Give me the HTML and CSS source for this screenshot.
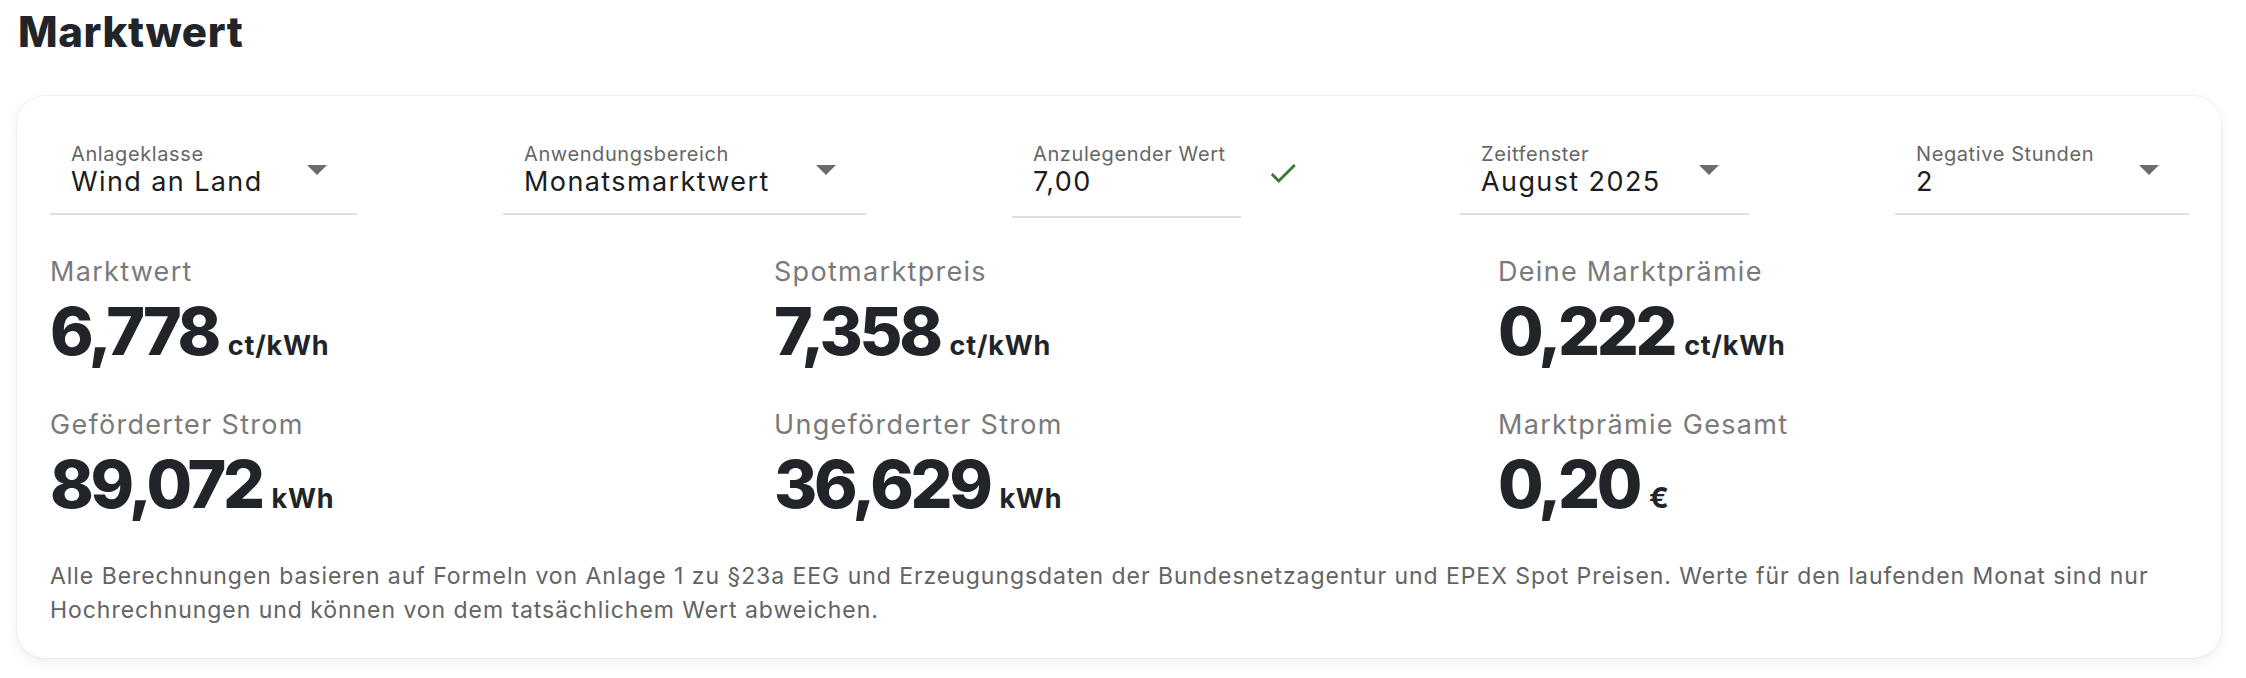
FILE: index.html
```html
<!DOCTYPE html>
<html lang="de">
<head>
<meta charset="utf-8">
<title>Marktwert</title>
<link rel="stylesheet" href="styles.css">
</head>
<body>
<h1 class="page-title">Marktwert</h1>
<section class="card">
  <div class="filters">
    <div class="field field-select w-anlage">
      <div class="field-text">
        <span class="field-label">Anlageklasse</span>
        <span class="field-value">Wind an Land</span>
      </div>
      <svg class="dropdown" viewBox="0 0 20 10" width="20" height="10"><path d="M0 0h20L10 10z"/></svg>
    </div>
    <div class="field field-select w-anwendung">
      <div class="field-text">
        <span class="field-label">Anwendungsbereich</span>
        <span class="field-value">Monatsmarktwert</span>
      </div>
      <svg class="dropdown" viewBox="0 0 20 10" width="20" height="10"><path d="M0 0h20L10 10z"/></svg>
    </div>
    <div class="input-group">
      <div class="field w-wert">
        <div class="field-text">
          <span class="field-label">Anzulegender Wert</span>
          <span class="field-value">7,00</span>
        </div>
      </div>
      <svg class="check" viewBox="0 0 24 24" width="34" height="34"><path d="M9 16.17L4.83 12l-1.42 1.41L9 19 21 7l-1.41-1.41z"/></svg>
    </div>
    <div class="field field-select w-zeit">
      <div class="field-text">
        <span class="field-label">Zeitfenster</span>
        <span class="field-value">August 2025</span>
      </div>
      <svg class="dropdown" viewBox="0 0 20 10" width="20" height="10"><path d="M0 0h20L10 10z"/></svg>
    </div>
    <div class="field field-select w-negativ">
      <div class="field-text">
        <span class="field-label">Negative Stunden</span>
        <span class="field-value">2</span>
      </div>
      <svg class="dropdown" viewBox="0 0 20 10" width="20" height="10"><path d="M0 0h20L10 10z"/></svg>
    </div>
  </div>

  <div class="stats">
    <div class="stat">
      <div class="stat-label">Marktwert</div>
      <div class="stat-value"><span class="num">6,778</span><span class="unit">ct/kWh</span></div>
    </div>
    <div class="stat">
      <div class="stat-label">Spotmarktpreis</div>
      <div class="stat-value"><span class="num">7,358</span><span class="unit">ct/kWh</span></div>
    </div>
    <div class="stat">
      <div class="stat-label">Deine Marktprämie</div>
      <div class="stat-value"><span class="num">0,222</span><span class="unit">ct/kWh</span></div>
    </div>
    <div class="stat">
      <div class="stat-label">Geförderter Strom</div>
      <div class="stat-value"><span class="num">89,072</span><span class="unit">kWh</span></div>
    </div>
    <div class="stat">
      <div class="stat-label">Ungeförderter Strom</div>
      <div class="stat-value"><span class="num">36,629</span><span class="unit">kWh</span></div>
    </div>
    <div class="stat">
      <div class="stat-label">Marktprämie Gesamt</div>
      <div class="stat-value"><span class="num">0,20</span><span class="unit unit-euro">€</span></div>
    </div>
  </div>

  <p class="footnote">Alle Berechnungen basieren auf Formeln von Anlage 1 zu §23a EEG und Erzeugungsdaten der Bundesnetzagentur und EPEX Spot Preisen. Werte für den laufenden Monat sind nur Hochrechnungen und können von dem tatsächlichem Wert abweichen.</p>
</section>
</body>
</html>
```

FILE: styles.css
```css
* { box-sizing: border-box; }

html, body {
  margin: 0;
  padding: 0;
  background: #ffffff;
}

body {
  font-family: "Inter", "Liberation Sans", sans-serif;
  color: #212529;
  padding: 7px 25px 20px 17px;
}

.page-title {
  margin: 0 0 39px 0;
  padding-left: 1px;
  font-size: 42px;
  line-height: 50px;
  font-weight: 800;
  letter-spacing: 0.6px;
  color: #212529;
}

.card {
  background: #ffffff;
  border-radius: 28px;
  box-shadow: 0 0 0 1px rgba(0, 0, 0, 0.035), 0 4px 14px rgba(0, 0, 0, 0.07);
  padding: 46px 31px 31px 33px;
}

/* filter row */
.filters {
  display: flex;
  gap: 146px;
  align-items: flex-start;
}

.field {
  display: flex;
  align-items: flex-start;
  border-bottom: 2px solid #e0e0e0;
  padding: 0 30px 15px 21px;
}

.field-text {
  display: flex;
  flex-direction: column;
  flex: 1;
  min-width: 0;
}

.field-label {
  font-size: 20px;
  line-height: 24px;
  color: #666666;
  letter-spacing: 0.6px;
  white-space: nowrap;
}

.field-value {
  font-size: 27px;
  line-height: 32px;
  color: #1c1c1c;
  letter-spacing: 1.4px;
  white-space: nowrap;
}

.dropdown {
  flex: none;
  margin-top: 23px;
  fill: #6b6b6b;
}

.w-anlage { width: 307px; }
.w-anwendung { width: 363px; }
.w-wert { width: 229px; }
.w-zeit { width: 289px; }
.w-negativ { width: 294px; }

.input-group {
  display: flex;
  align-items: flex-start;
  width: 302px;
}

.input-group .field {
  padding-bottom: 18px;
}

.check {
  flex: none;
  margin: 14px 0 0 25px;
  fill: #2e7d32;
}

/* stats */
.stats {
  display: grid;
  grid-template-columns: repeat(3, 1fr);
  column-gap: 32px;
  row-gap: 45px;
  margin-top: 38px;
}

.stat-label {
  font-size: 27px;
  line-height: 32px;
  color: #7a7a7a;
  letter-spacing: 1.3px;
  white-space: nowrap;
}

.stat-value {
  margin-top: 10px;
  display: flex;
  align-items: baseline;
  gap: 10px;
  white-space: nowrap;
}

.num {
  font-size: 66px;
  line-height: 66px;
  font-weight: 800;
  color: #212529;
  letter-spacing: -3.4px;
}

.unit {
  font-size: 27px;
  font-weight: 700;
  color: #212529;
  letter-spacing: 0.8px;
}

.unit-euro {
  font-size: 29px;
}

.footnote {
  margin: 42px 0 0 0;
  font-size: 23px;
  line-height: 34px;
  color: #636363;
  letter-spacing: 0.95px;
}
```
